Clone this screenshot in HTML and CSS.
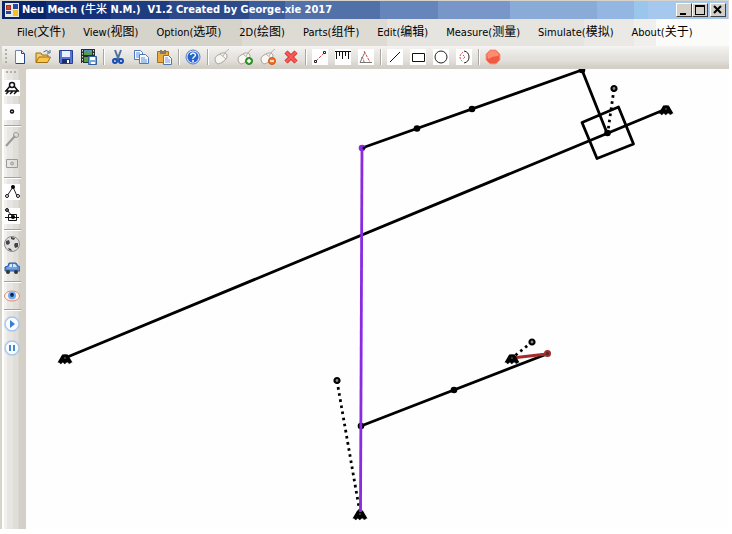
FILE: index.html
```html
<!DOCTYPE html>
<html lang="en">
<head>
<meta charset="utf-8">
<title>Neu Mech</title>
<link rel="stylesheet" href="styles.css">
</head>
<body>
<div class="window">
  <header class="titlebar">
    <svg class="app-icon" width="14" height="14" viewBox="0 0 14 14" aria-hidden="true"><path fill="#e8e8e0" d="M0 0h14v14H0z"/><path fill="#b42818" d="M1 2h5v5H1z"/><path fill="#2448a8" d="M8 1h5v5H8zM1 8h5v3H1z"/><path fill="#f4c020" d="M8 7h5v6H8z"/><path fill="#d04830" d="M2 3h3v3H2z"/></svg>
    <h1 class="title">Neu Mech (<span class="han">牛米</span> N.M.)&nbsp; V1.2 Created by George.xie 2017</h1>
    <div class="window-buttons">
      <button class="win-btn" aria-label="Minimize"><svg width="10" height="10"><path d="M1 8h6v2H1z"/></svg></button>
      <button class="win-btn" aria-label="Maximize"><svg width="10" height="10"><path d="M0 0h10v10H0zM1 2v7h8V2z" fill-rule="evenodd"/></svg></button>
      <button class="win-btn close" aria-label="Close"><svg width="10" height="10"><path d="M1 1l7 7M8 1L1 8" stroke="#000" stroke-width="2"/></svg></button>
    </div>
  </header>
  <nav class="menubar">
    <button>File(<span class="han">文件</span>)</button>
    <button>View(<span class="han">视图</span>)</button>
    <button>Option(<span class="han">选项</span>)</button>
    <button>2D(<span class="han">绘图</span>)</button>
    <button>Parts(<span class="han">组件</span>)</button>
    <button>Edit(<span class="han">编辑</span>)</button>
    <button>Measure(<span class="han">测量</span>)</button>
    <button>Simulate(<span class="han">模拟</span>)</button>
    <button>About(<span class="han">关于</span>)</button>
  </nav>
  <div class="toolbar" role="toolbar" aria-label="Main tools">
    <span class="grip"></span>
    <button aria-label="New"><svg viewBox="0 0 16 16"><path d="M3.500 1.500h6l3 3v10h-9z" fill="#fcfdff" stroke="#6c86b4"/><path d="M9.500 1.500v3h3M12.500 5v9.500H4" fill="none" stroke="#254a80"/></svg></button>
    <button aria-label="Open"><svg viewBox="0 0 16 16"><path d="M1 13V4h5l1 2h6v2" fill="#f3cf69" stroke="#9a6b18"/><path d="M1 13.500L4 8h11.500l-3 5.500z" fill="#f8c748" stroke="#a06c12"/><path d="M8.500 3q3-3 5.500 0m1-2v3h-3" fill="none" stroke="#41699d"/></svg></button>
    <button aria-label="Save"><svg viewBox="0 0 16 16"><path d="M1.500 1.500h13v13h-12l-1-1z" fill="#5276d5" stroke="#283d93"/><path d="M4 2h8v6H4z" fill="#e7effc"/><path d="M4 10h8v4H4z" fill="#202c69"/><path d="M9 11h2v3H9z" fill="#fff"/></svg></button>
    <button aria-label="Save animation"><svg viewBox="0 0 16 16"><path d="M0 0h14v14H0z" fill="#22302b"/><path d="M3 1h8v5H3z" fill="#5793bb"/><path d="M3 4l3-2 2 2 3-1v3H3zM3 8h8v5H3z" fill="#5a9b44"/><path d="M1.500 1v13M12.500 1v13" stroke="#ddd" stroke-dasharray="1.500 1.500"/><path d="M7.500 7.500h8v8h-8z" fill="#79a7d7" stroke="#315f97"/><path d="M9 8h5v3H9zM10 13h4v2h-4z" fill="#fff"/></svg></button>
    <i class="sep"></i>
    <button aria-label="Cut"><svg viewBox="0 0 16 16"><path d="M5 1l3 8 2 2M11 1L8 9l-3 2" fill="none" stroke="#51739e" stroke-width="2"/><circle cx="5" cy="12" r="2" fill="none" stroke="#174eb0" stroke-width="2"/><circle cx="11" cy="12" r="2" fill="none" stroke="#174eb0" stroke-width="2"/></svg></button>
    <button aria-label="Copy"><svg viewBox="0 0 16 16"><g fill="#f4f8ff" stroke="#4f79bb"><path d="M1.500 1.500h6l2 2v7h-8z"/><path d="M6.500 5.500h6l3 3v6h-9z"/></g><path d="M3 4h4M3 6h3M3 8h3M8 9h4M8 11h6M8 13h6" stroke="#5e91d6"/></svg></button>
    <button aria-label="Paste"><svg viewBox="0 0 16 16"><path d="M1.500 2.500h11v11h-11z" fill="#e9ac43" stroke="#a86d1c"/><path d="M4 1h6v4H4z" fill="#7c7b70"/><path d="M6 1h2v1H6z" fill="#f5e4af"/><path d="M7.500 6.500h5l3 3v6h-8z" fill="#f3f7ff" stroke="#5376a7"/><path d="M9 9h3M9 11h5M9 13h5" stroke="#729dd3"/></svg></button>
    <i class="sep"></i>
    <button aria-label="Help"><svg viewBox="0 0 16 16"><circle cx="8" cy="8" r="7" fill="#d5e4ff" stroke="#537cc4"/><circle cx="8" cy="8" r="5.500" fill="#2562cb"/><path d="M5.500 6q.5-2 2.500-2t2.500 2q0 1-1.500 2t-1 2M8 11v2" fill="none" stroke="#fff" stroke-width="1.500"/></svg></button>
    <i class="sep"></i>
    <button aria-label="Mouse"><svg viewBox="0 0 16 16"><path d="M1 11q-1-3 3-5l4-2q4-1 5 2t-3 6-6 3-3-4z" fill="#f8f6f2" stroke="#aaa59d"/><path d="M6 5l6 5M9 7l2-3q1-2 4-4" fill="none" stroke="#b7b1a7"/></svg></button>
    <button aria-label="Add mouse point"><svg viewBox="0 0 16 16"><path d="M1 11q-1-3 3-5l4-2q4-1 5 2t-3 6-6 3-3-4z" fill="#f8f6f2" stroke="#aaa59d"/><path d="M6 5l6 5M9 7l2-3q1-2 4-4" fill="none" stroke="#b7b1a7"/><circle cx="12" cy="12" r="3.500" fill="#3ba12e" stroke="#247d1c"/><path d="M10 12h4M12 10v4" stroke="#fff" stroke-width="1.500"/></svg></button>
    <button aria-label="Remove mouse point"><svg viewBox="0 0 16 16"><path d="M1 11q-1-3 3-5l4-2q4-1 5 2t-3 6-6 3-3-4z" fill="#f8f6f2" stroke="#aaa59d"/><path d="M6 5l6 5M9 7l2-3q1-2 4-4" fill="none" stroke="#b7b1a7"/><circle cx="12" cy="12" r="3.500" fill="#ef7626" stroke="#d35210"/><path d="M10 12h4" stroke="#fff" stroke-width="1.500"/></svg></button>
    <button aria-label="Delete"><svg viewBox="0 0 16 16"><path d="M3 3l10 10M13 3L3 13" stroke="#d33030" stroke-width="4.500"/><path d="M3 3l10 10M13 3L3 13" stroke="#f45b55" stroke-width="2.500"/></svg></button>
    <i class="sep"></i>
    <button aria-label="Measure distance"><svg viewBox="0 0 16 16"><path fill="#fff" d="M0 0h16v16H0z"/><path d="M4 12l8-8" stroke="#d34c4c" stroke-dasharray="3 1"/><path d="M2.500 11.500h2v2h-2zM11.500 2.500h2v2h-2z" fill="none" stroke="#222"/></svg></button>
    <button aria-label="Ruler"><svg viewBox="0 0 16 16"><path fill="#fff" d="M0 0h16v16H0z"/><path d="M0 2.500h16M1.500 3v7M4.500 3v4M7.500 3v7M10.500 3v4M13.500 3v7" stroke="#111"/></svg></button>
    <button aria-label="Measure angle"><svg viewBox="0 0 16 16"><path fill="#fff" d="M0 0h16v16H0z"/><path d="M7 3L2 13.500h12" fill="none" stroke="#777"/><path d="M6 2l6 11M3 9q2-2 3 4" fill="none" stroke="#d64b4b" stroke-dasharray="3 1"/></svg></button>
    <i class="sep"></i>
    <button aria-label="Line"><svg viewBox="0 0 16 16"><path fill="#fff" d="M0 0h16v16H0z"/><path d="M3 13L13 3" stroke="#111"/></svg></button>
    <button aria-label="Rectangle"><svg viewBox="0 0 16 16"><path fill="#fff" d="M0 0h16v16H0z"/><path d="M2.500 4.500h12v8h-12z" fill="none" stroke="#111"/></svg></button>
    <button aria-label="Circle"><svg viewBox="0 0 16 16"><path fill="#fff" d="M0 0h16v16H0z"/><circle cx="8" cy="8" r="6" fill="none" stroke="#222"/></svg></button>
    <button aria-label="Arc"><svg viewBox="0 0 16 16"><path fill="#fff" d="M0 0h16v16H0z"/><path d="M8 2q5 1 5 6t-5 6" fill="none" stroke="#222"/><path d="M7 3Q1 8 7 13M7 6l2 2-2 2" fill="none" stroke="#dc4848" stroke-dasharray="2 1"/></svg></button>
    <i class="sep"></i>
    <button aria-label="Stop"><svg viewBox="0 0 16 16"><path d="M5 1h6l4 4v6l-4 4H5l-4-4V5z" fill="#f05a43" stroke="#f3a08e"/><path d="M5 2h6l3 3-1 2q-5 0-10 3L2 5z" fill="#ff8b71"/></svg></button>
  </div>
  <div class="workspace">
    <div class="sidebar" role="toolbar" aria-label="Mechanism tools">
      <span class="grip"></span>
      <button aria-label="Fixed joint"><svg viewBox="0 0 16 16"><path fill="#fff" d="M0 0h16v16H0z"/><circle cx="8" cy="5" r="2.500" fill="none" stroke="#111" stroke-width="1.500"/><path d="M6 6l-4 5h12l-4-5M1 11h14M5 11l-3 3M9 11l-3 3M13 11l-3 3" fill="none" stroke="#111" stroke-width="1.500"/></svg></button>
      <button aria-label="Joint"><svg viewBox="0 0 16 16"><path fill="#fff" d="M0 0h16v16H0z"/><circle cx="8" cy="7.500" r="1.500" fill="#fff" stroke="#111" stroke-width="1.500"/></svg></button>
      <i class="sep"></i>
      <button aria-label="Crank" class="dim"><svg viewBox="0 0 16 16"><circle cx="12" cy="3" r="2.500"/><path d="M11 4l-9 10" stroke-width="2"/></svg></button>
      <button aria-label="Slider" class="dim"><svg viewBox="0 0 16 16"><path d="M2.500 3.500h11v8h-11z"/><circle cx="8" cy="7.500" r="1.500"/><path d="M8 7v1"/></svg></button>
      <i class="sep"></i>
      <button aria-label="Linkage"><svg viewBox="0 0 16 16"><path fill="#fff" d="M0 0h16v16H0z"/><path d="M3 12l6-9 4 9" fill="none" stroke="#222"/><circle cx="9" cy="3" r="2"/><circle cx="3" cy="12" r="1.500" fill="#fff" stroke="#111"/><circle cx="14" cy="12" r="1.500" fill="#fff" stroke="#111"/></svg></button>
      <button aria-label="Slider crank"><svg viewBox="0 0 16 16"><path fill="#fff" d="M0 0h16v16H0z"/><path d="M3 2l6 7M1 9.500h14M4.500 6.500h8v6h-8z" fill="none" stroke="#111"/><circle cx="3" cy="2" r="1.500" fill="#777" stroke="#111"/><circle cx="9" cy="9" r="2"/></svg></button>
      <i class="sep"></i>
      <button aria-label="Ball"><svg viewBox="0 0 16 16"><circle cx="8" cy="8" r="7.500" fill="#dedede" stroke="#898989"/><path d="M2 5l3-1 1 3-2 2-2-1zM7 1l4 1-1 2-3-1zM11 7l3 0v4l-3 1-1-3zM4 12l3 1 1 2-3-1z" fill="#444"/></svg></button>
      <button aria-label="Car"><svg viewBox="0 0 16 16"><path d="M1 11V7l3-1 1-3h7l2 3 2 1v4z" fill="#598ed5" stroke="#2e5aa1"/><path d="M6 4h2v3H5zM9 4h2l2 3H9z" fill="#d7e7fc"/><path d="M3 8h10" stroke="#91b8ec"/><circle cx="4" cy="12" r="2" fill="#333"/><circle cx="12" cy="12" r="2" fill="#333"/></svg></button>
      <i class="sep"></i>
      <button aria-label="View"><svg viewBox="0 0 16 16"><ellipse cx="8" cy="8" rx="7.500" ry="5" fill="#fff5ef" stroke="#dd8a6e"/><circle cx="8" cy="7.500" r="4" fill="#75acef"/><circle cx="8" cy="7" r="2" fill="#12366e"/><path d="M8 5v2" stroke="#000"/></svg></button>
      <i class="sep"></i>
      <button aria-label="Play"><svg viewBox="0 0 16 16"><circle cx="8" cy="8" r="7" fill="#f8fbff" stroke="#a8c6ed" stroke-width="1.500"/><path d="M6 4l5 4-5 4z" fill="#3b7ed0"/></svg></button>
      <button aria-label="Pause"><svg viewBox="0 0 16 16"><circle cx="8" cy="8" r="7" fill="#f8fbff" stroke="#a8c6ed" stroke-width="1.500"/><path d="M5 5h2v6H5zM9 5h2v6H9z" fill="#4b86ce"/></svg></button>
    </div>
    <main class="canvas">
      <svg class="drawing" role="img" aria-label="Mechanism">
        <defs>
          <g id="ground"><path d="M-2-2L-5 3H5L2-2z" stroke="#000"/><path d="M-3 3l-2 2.500M1 3l-2 2.500M4 3l1 2.500" stroke="#000" stroke-width="2.500"/><circle r="3.500"/><circle r="0.700" fill="#999"/></g>
          <g id="pin"><circle r="2.500" fill="#888" stroke="#000" stroke-width="2.200"/></g>
        </defs>
        <g transform="translate(-26 -69)" fill="none" stroke="#000" stroke-width="2.800">
          <path d="M65 358L666 109M362 148L582 70 607 133M361 426L547 354"/>
          <path d="M582 122.500L618.500 107 633.500 144 597 158.500z" stroke-linejoin="round"/>
          <path d="M614 89L608 131M532 342L512 358M337 381L360 513" stroke-dasharray="2.600 3.600"/>
          <path d="M512 358L547 354" stroke="#a52a2a"/>
          <g fill="#000" stroke="none">
            <circle cx="582" cy="70" r="3.300"/><circle cx="607.500" cy="133" r="3.300"/><circle cx="417" cy="128.500" r="3.300"/><circle cx="472" cy="109" r="3.300"/><circle cx="454" cy="390" r="3.300"/><circle cx="361" cy="426" r="3.300"/>
            <use href="#pin" x="614" y="88.500"/><use href="#pin" x="532" y="342"/><use href="#pin" x="337" y="380.500"/>
            <use href="#ground" x="65" y="358"/><use href="#ground" x="666" y="109"/><use href="#ground" x="512" y="358"/><use href="#ground" x="360" y="514"/>
          </g>
          <path d="M362 148L360.500 512" stroke="#8a2be2"/>
          <circle cx="362" cy="148" r="3.300" fill="#8a2be2" stroke="none"/><circle cx="364" cy="148" r="1.500" fill="#000" stroke="none"/>
          <circle cx="547.500" cy="353.500" r="2.500" fill="#333" stroke="#a52a2a" stroke-width="2"/>
        </g>
      </svg>
    </main>
  </div>
</div>
</body>
</html>
```
FILE: styles.css
```css
* { box-sizing: border-box; }

body {
  margin: 0;
  padding: 0 3px 5px 0;
  height: 100vh;
  background: #fff;
  font-family: "DejaVu Sans Condensed", "Noto Sans CJK SC", sans-serif;
  font-size: 11px;
  color: #000;
}

button {
  font: inherit;
  color: inherit;
  margin: 0;
  padding: 0;
  border: 0;
  background: none;
}

svg { display: block; }

.han {
  font-family: "Noto Sans CJK SC", sans-serif;
  font-size: 12px;
  line-height: 12px;
  font-weight: 400;
}

.window {
  display: flex;
  flex-direction: column;
  height: 100%;
  background: #d6d3cb;
  border-top: 1px solid #d6d3cb;
  border-left: 2px solid #d6d3cb;
}

.titlebar {
  display: flex;
  align-items: center;
  gap: 3px;
  height: 18px;
  flex: none;
  margin-right: 1px;
  padding: 0 2px 0 3px;
  color: #fff;
  background: linear-gradient(90deg,
    #0a246a 6%, #14307a 6% 15%, #1f3c80 15% 23%, #2c4a8a 23% 34%,
    #3d5c9b 34% 39%, #5271a9 39% 52%, #6685ba 52% 60%, #7896c8 60% 70%,
    #8aaad8 70% 82%, #94b6e2 82% 87%, #9bc6ec 87% 89%, #a6c8ef 89%);
}

.title {
  flex: 1;
  margin: 0;
  font-size: 11px;
  line-height: 18px;
  font-weight: 700;
  white-space: nowrap;
}

.title .han {
  font-size: 11px;
  font-weight: 500;
}

.window-buttons { display: flex; }

.win-btn {
  display: grid;
  place-items: center;
  width: 16px;
  height: 14px;
  background: #d4d0c8;
  border: 1px solid;
  border-color: #fff #404040 #404040 #fff;
}

.close { margin-left: 2px; }

.menubar {
  display: flex;
  align-items: center;
  gap: 18px;
  height: 27px;
  flex: none;
  padding: 0 0 2px 15px;
  white-space: nowrap;
  background: linear-gradient(90deg,
    #d6d3cb 33%, #dedbd5 33% 53%, #e6e4df 53% 80%,
    #ebe9e6 80% 87%, #f1efec 87% 90%, #fbfbf9 90%);
}

.toolbar {
  display: flex;
  align-items: center;
  height: 23px;
  flex: none;
  padding-bottom: 2px;
  background: linear-gradient(#f5f4f2, #e9e7e3 35%, #e2dfda 65%, #d3cfc7 90%);
}

.toolbar button {
  display: grid;
  place-items: center;
  width: 23px;
  height: 20px;
}

.toolbar svg,
.sidebar svg { width: 16px; height: 16px; }

.toolbar .sep {
  width: 2px;
  height: 16px;
  margin: 0 1px 0 3px;
  background: #aaa7a1;
  border-right: 1px solid #fff;
}

.toolbar .grip {
  width: 2px;
  height: 16px;
  margin: 0 1px 0 3px;
  background: repeating-linear-gradient(#b3afa8 0 2px, transparent 2px 4px);
}

.workspace {
  display: flex;
  flex: 1;
  min-height: 0;
}

.sidebar {
  display: flex;
  flex-direction: column;
  width: 24px;
  flex: none;
  padding-right: 4px;
  background: linear-gradient(90deg, #fff 2px, #f1f0ed 2px 5px, #e7e6e2 5px 11px, #e0ded9 11px 16px, #d4d0c8 17px);
}

.sidebar button {
  display: grid;
  place-items: center;
  width: 20px;
  height: 24px;
  flex: none;
}

.sidebar .sep {
  width: 17px;
  height: 2px;
  margin: 1px 0 1px 2px;
  flex: none;
  background: #fff;
  border-top: 1px solid #a6a39e;
}

.sidebar .grip {
  width: 10px;
  height: 2px;
  margin: 2px 0 3px 4px;
  flex: none;
  background: repeating-linear-gradient(90deg, #b3afa8 0 2px, transparent 2px 4px);
}

.dim svg { fill: none; stroke: #999; }

.canvas {
  flex: 1;
  min-width: 0;
  background: #fefefe;
  border-top-left-radius: 2px;
}

.drawing {
  width: 100%;
  height: 100%;
}
```
